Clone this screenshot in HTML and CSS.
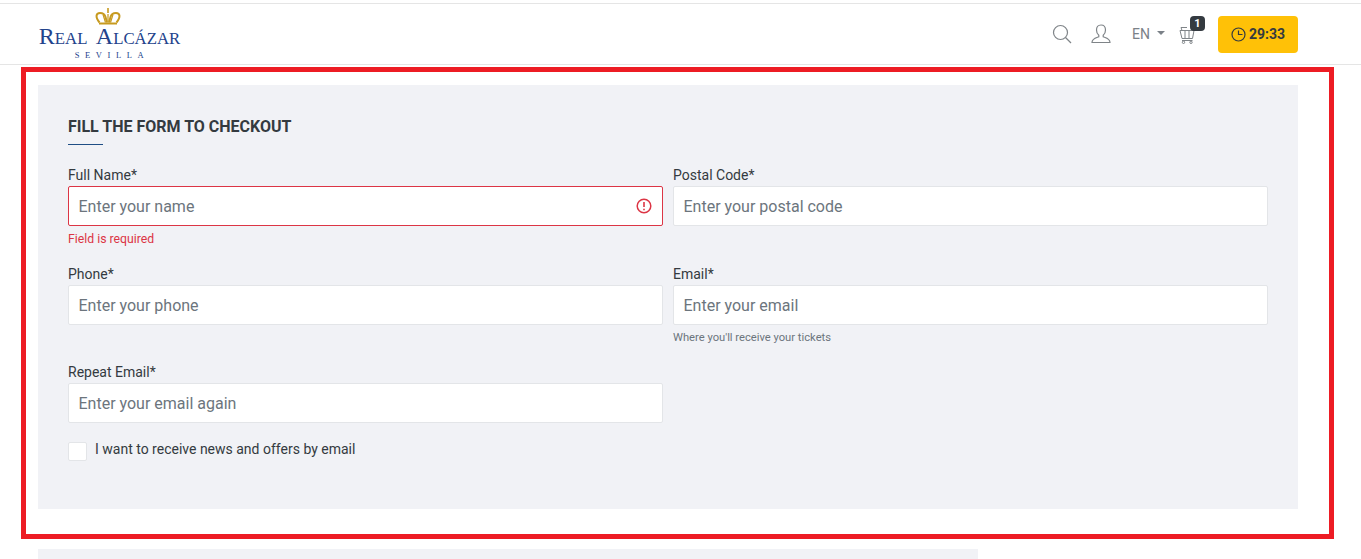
FILE: index.html
```html
<!DOCTYPE html>
<html lang="en">
<head>
<meta charset="utf-8">
<title>Real Alcázar Sevilla - Checkout</title>
<link rel="stylesheet" href="styles.css">
</head>
<body>
<header class="header">
  <a class="logo" href="#">
    <svg class="crown" width="26" height="17" viewBox="0 0 26 17" fill="none" stroke="#c79a1f" stroke-width="2">
      <path d="M13 0v5" stroke-width="1.600"/>
      <path d="M4.500 14.500C0 9 1 5 5 5c3.500 0 5 2 5.500 4L12 14.500"/>
      <path d="M21.500 14.500C26 9 25 5 21 5c-3.500 0-5 2-5.500 4L14 14.500"/>
      <path d="M13 6v8.500M8 6.500l2.500 8M18 6.500l-2.500 8" stroke-width="1.200"/>
      <path d="M4 15.500h18" stroke-width="2"/>
    </svg>
    <span class="logo-name"><span class="logo-cap">R</span>EAL&nbsp; <span class="logo-cap">A</span>LCÁZAR</span>
    <span class="logo-city">SEVILLA</span>
  </a>
  <nav class="tools">
    <svg class="icon-search" width="20" height="20" viewBox="0 0 20 20" fill="none" stroke="#7f8488" stroke-width="1.200"><circle cx="8.500" cy="8.500" r="7"/><path d="M13.500 13.500 19 19"/></svg>
    <svg class="icon-user" width="20" height="20" viewBox="0 0 20 20" fill="none" stroke="#7f8488" stroke-width="1.200"><path d="M10 1c-3 0-4.500 2.300-4.500 5 0 2.500 1 4.300 2.300 5.300v1.500c-2.500 1-6.800 1.700-6.800 5.700h18c0-4-4.300-4.700-6.800-5.700v-1.500c1.300-1 2.300-2.800 2.300-5.300 0-2.700-1.500-5-4.500-5z"/></svg>
    <span class="lang">EN<i class="caret"></i></span>
    <span class="cart">
      <svg width="17" height="18" viewBox="0 0 17 18" fill="none" stroke="#7f8488" stroke-width="1"><path d="M2 1.500h6M2 1.500l1 3M1 4.500h14l-1.500 8H3zM6 4.500v8M10 4.500v8M3 14.500h10.500"/><circle cx="4.500" cy="16.300" r="1.200"/><circle cx="12" cy="16.300" r="1.200"/></svg>
      <b class="badge">1</b>
    </span>
    <button class="timer" type="button">
      <svg width="15" height="15" viewBox="0 0 15 15" fill="none" stroke="#343a40" stroke-width="1.200"><circle cx="7.500" cy="7.500" r="6.500"/><path d="M7.500 3.500v4h4"/></svg>
      29:33
    </button>
  </nav>
</header>

<main class="main">
  <section class="panel">
    <h2 class="title">FILL THE FORM TO CHECKOUT</h2>
    <form class="form">
      <div class="field">
        <label class="label">Full Name*</label>
        <div class="control control-error">
          <input class="input" type="text" placeholder="Enter your name">
          <svg class="error-icon" width="16" height="16" viewBox="0 0 16 16" fill="none" stroke="#dc3545" stroke-width="1.500"><circle cx="8" cy="8" r="6.800"/><path d="M8 4v5M8 10.800v1.400" stroke-width="1.600"/></svg>
        </div>
        <small class="hint hint-error">Field is required</small>
      </div>
      <div class="field">
        <label class="label">Postal Code*</label>
        <div class="control"><input class="input" type="text" placeholder="Enter your postal code"></div>
      </div>
      <div class="field">
        <label class="label">Phone*</label>
        <div class="control"><input class="input" type="text" placeholder="Enter your phone"></div>
      </div>
      <div class="field">
        <label class="label">Email*</label>
        <div class="control"><input class="input" type="text" placeholder="Enter your email"></div>
        <small class="hint">Where you'll receive your tickets</small>
      </div>
      <div class="field">
        <label class="label">Repeat Email*</label>
        <div class="control"><input class="input" type="text" placeholder="Enter your email again"></div>
      </div>
      <label class="check">
        <span class="box"></span>
        <span>I want to receive news and offers by email</span>
      </label>
    </form>
  </section>
  <section class="panel-next"></section>
</main>
<div class="annotation"></div>
</body>
</html>
```
FILE: styles.css
```css
* { box-sizing: border-box; }
html, body { margin: 0; height: 559px; overflow: hidden; background: #fff; }
body { font-family: Roboto, "Liberation Sans", sans-serif; color: #343a40; padding-top: 3px; }

.header {
  height: 62px;
  display: flex;
  align-items: center;
  justify-content: space-between;
  padding: 0 63px 0 39px;
  border-top: 1px solid #e5e5e5;
  border-bottom: 1px solid #e5e5e5;
}
.logo { display: flex; flex-direction: column; align-items: center; text-decoration: none; width: 141px; }
.crown { display: block; margin-right: 3px; margin-bottom: 1px; }
.logo-name {
  font-family: "Liberation Serif", serif;
  font-size: 16.800px;
  line-height: 20px;
  color: #23438c;
  white-space: nowrap;
}
.logo-cap { font-size: 24px; }
.logo-city {
  font-family: "Liberation Serif", serif;
  font-size: 8.500px;
  line-height: 10px;
  letter-spacing: 5.600px;
  color: #23438c;
  margin-left: 5px;
  margin-top: 1px;
}

.tools { display: flex; align-items: center; }
.icon-search { margin-right: 19px; }
.icon-user { margin-right: 21px; }
.lang { font-size: 14px; color: #7b8188; display: flex; align-items: center; margin-right: 14px; }
.caret { display: block; margin-left: 7px; margin-top: -2px; border: 4px solid transparent; border-top-color: #7b8188; border-bottom: 0; }
.cart { position: relative; display: block; height: 18px; margin-right: 20px; margin-top: 1px; width: 19px; }
.badge {
  position: absolute;
  left: 11px;
  top: -10px;
  width: 15px;
  height: 15px;
  border-radius: 4px;
  background: #343a40;
  color: #fff;
  font-size: 11px;
  line-height: 15px;
  text-align: center;
}
.timer {
  width: 80px;
  height: 37px;
  display: flex;
  align-items: center;
  justify-content: center;
  gap: 3px;
  border: 0;
  border-radius: 4px;
  background: #ffc107;
  color: #343a40;
  font: 700 14px Roboto, sans-serif;
  padding: 0;
}

.main { padding: 20px 63px 0 38px; }
.panel { background: #f1f2f6; height: 424px; padding: 32px 30px 0; }
.title {
  position: relative;
  margin: 0;
  font-size: 16px;
  line-height: 19px;
  font-weight: 700;
  color: #343a40;
  padding-bottom: 9px;
  margin-bottom: 21px;
}
.title::after {
  content: "";
  display: block;
  width: 35px;
  height: 1px;
  background: #1f4e85;
  position: absolute;
  left: 0;
  bottom: 0;
}
.form { display: grid; grid-template-columns: 595px 595px; column-gap: 10px; grid-template-rows: 99px 98px 78px auto; }
.label { display: block; font-size: 14px; line-height: 17px; color: #343a40; padding-top: 1px; margin-bottom: 2px; height: 18px; }
.control {
  height: 40px;
  display: flex;
  align-items: center;
  background: #fff;
  border: 1px solid #e3e5e8;
  border-radius: 2px;
  padding: 0 10px 0 9.500px;
}
.control-error { border-color: #dc3545; }
.input {
  flex: 1;
  min-width: 0;
  border: 0;
  outline: 0;
  padding: 0;
  background: transparent;
  font: 16px Roboto, sans-serif;
  color: #343a40;
}
.input::placeholder { color: #6c757d; opacity: 1; }
.error-icon { flex: none; }
.hint { display: block; font-size: 11.200px; line-height: 13px; margin-top: 6px; color: #6c757d; }
.hint-error { font-size: 12.250px; margin-top: 7px; color: #dc3545; }
.check { grid-column: 1 / 3; display: flex; align-items: flex-start; gap: 8px; font-size: 14px; line-height: 17px; color: #343a40; }
.box { width: 19px; height: 19px; margin-top: 1px; background: #fff; border: 1px solid #e3e5e8; border-radius: 2px; }

.panel-next { background: #f1f2f6; width: 940px; height: 10px; margin-top: 40px; }

.annotation {
  position: absolute;
  left: 21px;
  top: 67px;
  width: 1313px;
  height: 472px;
  border: 5px solid #ed1c24;
  pointer-events: none;
}
```
